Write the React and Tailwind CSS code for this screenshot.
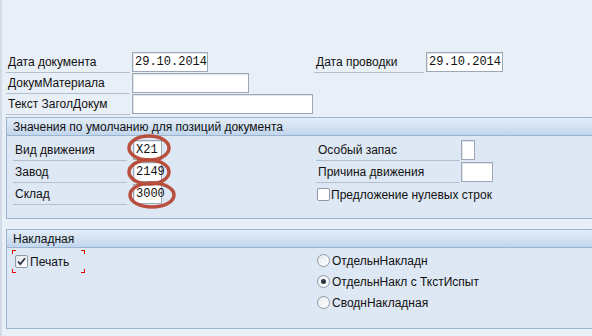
import React from "react";

function Input({ w, value }) {
  return (
    <div
      className={`h-[20px] bg-white border border-[#9ca8b6] shadow-[inset_1px_1px_0_#e2e6ea] flex items-center pl-[2px] font-['Liberation_Mono',monospace] text-[12px] leading-none ${w}`}
    >
      {value}
    </div>
  );
}

function Label({ w, children }) {
  return (
    <div className={`h-[21px] flex items-center border-b border-[#b3bfcc] pl-[2px] ${w}`}>
      {children}
    </div>
  );
}

function GroupHeader({ children }) {
  return (
    <div className="h-[18px] flex items-center pl-[6px] bg-gradient-to-b from-[#e4edf7] to-[#c2d6ec] border-b border-[#9ab4d2] rounded-tr-[4px]">
      {children}
    </div>
  );
}

function Radio({ checked, children }) {
  return (
    <div className="flex items-center h-[21px]">
      <div className="w-[13px] h-[13px] rounded-full border border-[#8f9aa6] bg-gradient-to-br from-[#e6e9ed] to-white flex items-center justify-center">
        {checked && <div className="w-[5px] h-[5px] rounded-full bg-[#2c3440]" />}
      </div>
      <span className="ml-[2px]">{children}</span>
    </div>
  );
}

export default function App() {
  return (
    <div className="w-[592px] h-[336px] bg-[#e9eff7] text-[12px] text-[#111] font-['Liberation_Sans',sans-serif] relative overflow-hidden border-l-[2px] border-[#d3dce6]">
      <div className="pt-[52px] pl-[4px]">
        <div className="flex items-start h-[21px]">
          <Label w="w-[124px]">Дата документа</Label>
          <div className="ml-[2px]"><Input w="w-[76px]" value="29.10.2014" /></div>
          <div className="ml-[106px]"><Label w="w-[110px]">Дата проводки</Label></div>
          <div className="ml-[2px]"><Input w="w-[77px]" value="29.10.2014" /></div>
        </div>
        <div className="flex items-start h-[21px]">
          <Label w="w-[124px]">ДокумМатериала</Label>
          <div className="ml-[2px]"><Input w="w-[117px]" value="" /></div>
        </div>
        <div className="flex items-start h-[21px]">
          <Label w="w-[124px]">Текст ЗаголДокум</Label>
          <div className="ml-[2px]"><Input w="w-[181px]" value="" /></div>
        </div>
      </div>

      {/* Group 1 */}
      <div className="ml-[4px] mt-[2px] h-[102px] border border-r-0 border-[#9ab4d2] bg-[#dee8f4]">
        <GroupHeader>Значения по умолчанию для позиций документа</GroupHeader>
        <div className="pt-[4px] pl-[6px] flex">
          <div className="flex flex-col gap-[1px]">
            <div className="flex items-start h-[21px]">
              <Label w="w-[114px]">Вид движения</Label>
              <div className="ml-[6px]"><Input w="w-[29px]" value="X21" /></div>
            </div>
            <div className="flex items-start h-[21px]">
              <Label w="w-[114px]">Завод</Label>
              <div className="ml-[6px]"><Input w="w-[29px]" value="2149" /></div>
            </div>
            <div className="flex items-start h-[21px]">
              <Label w="w-[114px]">Склад</Label>
              <div className="ml-[6px]"><Input w="w-[29px]" value="3000" /></div>
            </div>
          </div>
          <div className="ml-[154px] flex flex-col gap-[1px]">
            <div className="flex items-start h-[21px]">
              <Label w="w-[144px]">Особый запас</Label>
              <div className="ml-[1px]"><Input w="w-[14px]" value="" /></div>
            </div>
            <div className="flex items-start h-[21px]">
              <Label w="w-[144px]">Причина движения</Label>
              <div className="ml-[1px]"><Input w="w-[32px]" value="" /></div>
            </div>
            <div className="flex items-center h-[21px] pl-[1px]">
              <div className="w-[13px] h-[13px] border border-[#8f9aa6] bg-white rounded-[2px]" />
              <span className="ml-[1px]">Предложение нулевых строк</span>
            </div>
          </div>
        </div>
      </div>

      {/* Group 2 */}
      <div className="ml-[4px] mt-[10px] h-[100px] border border-r-0 border-[#9ab4d2] bg-[#dee8f4]">
        <GroupHeader>Накладная</GroupHeader>
        <div className="flex pt-[2px]">
          <div className="relative ml-[5px] w-[73px] h-[23px] flex items-center pl-[3px]">
            <div className="w-[13px] h-[13px] border border-[#8f9aa6] bg-gradient-to-br from-[#e3e6ea] to-white rounded-[2px] flex items-center justify-center">
              <svg width="11" height="11" viewBox="0 0 11 11">
                <path d="M2 5.5 L4.3 8.2 L9 2.2" fill="none" stroke="#2b3340" strokeWidth="1.8" />
              </svg>
            </div>
            <span className="ml-[2px]">Печать</span>
            <div className="absolute left-0 top-0 w-[4px] h-[4px] border-l border-t border-[#e00000]" />
            <div className="absolute right-0 top-0 w-[4px] h-[4px] border-r border-t border-[#e00000]" />
            <div className="absolute left-0 bottom-0 w-[4px] h-[4px] border-l border-b border-[#e00000]" />
            <div className="absolute right-0 bottom-0 w-[4px] h-[4px] border-r border-b border-[#e00000]" />
          </div>
          <div className="ml-[232px] flex flex-col">
            <Radio>ОтдельнНакладн</Radio>
            <Radio checked>ОтдельнНакл с ТкстИспыт</Radio>
            <Radio>СводнНакладная</Radio>
          </div>
        </div>
      </div>

      <svg className="absolute left-0 top-0 pointer-events-none" width="592" height="336">
        <g fill="none" stroke="#b5402a" strokeWidth="3.5" opacity="0.9">
          <ellipse cx="147" cy="148" rx="20" ry="12" />
          <ellipse cx="147" cy="172" rx="20" ry="12" />
          <ellipse cx="150" cy="195" rx="22" ry="12" />
        </g>
      </svg>
    </div>
  );
}
